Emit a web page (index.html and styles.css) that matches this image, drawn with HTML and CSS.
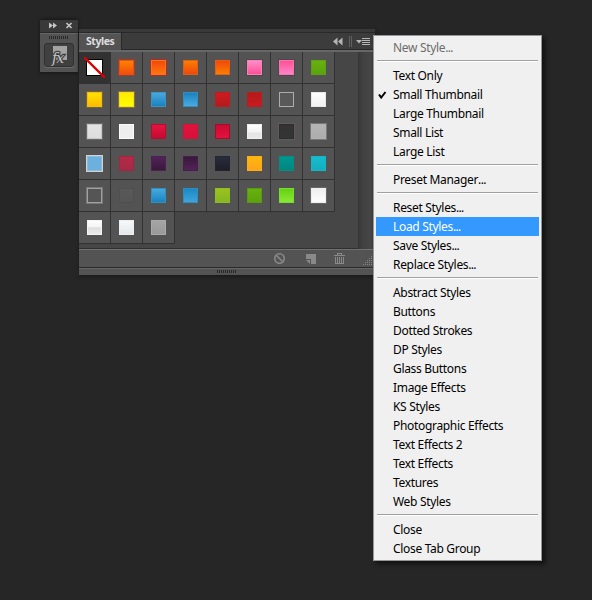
FILE: index.html
```
<!DOCTYPE html>
<html lang="en">
<head>
<meta charset="utf-8">
<title>Styles</title>
<link rel="stylesheet" href="styles.css">
</head>
<body>
<main class="workspace">
  <aside class="dock">
    <header class="dock-head">
      <svg width="38" height="12" viewBox="0 0 38 12" fill="#c4c4c4"><path d="M9 2.500l4 3-4 3zM13 2.500l4 3-4 3z"/><path d="M26.500 3l5 5M31.500 3l-5 5" stroke="#c4c4c4" stroke-width="1.700"/></svg>
    </header>
    <div class="dock-body">
      <div class="grip"></div>
      <button class="fx" aria-label="Styles">
        <svg width="28" height="22" viewBox="0 0 28 22"><path d="M8 2h14v14H8z" fill="#a3a3a3"/><text x="7" y="19">fx</text></svg>
      </button>
    </div>
  </aside>
  <section class="panel">
    <div class="panel-strip"></div>
    <header class="tabs">
      <div class="tab">Styles</div>
      <div class="tabs-rest">
        <svg width="42" height="17" viewBox="0 0 42 17" fill="#b5b5b5"><path d="M4.500 4.500v8l-4.500-4zM9.500 4.500v8l-4.500-4z"/><path d="M16 3h1v11h-1zM18 3h1v11h-1z" fill="#606060"/><path d="M23 7h6l-3 3.500zM29 5h8v1h-8zM29 7h8v1h-8zM29 9h8v1h-8zM29 11h8v1h-8z"/></svg>
      </div>
    </header>
    <div class="panel-body">
      <div class="swatches" id="swatches"></div>
      <div class="scroll"></div>
    </div>
    <footer class="tools">
      <svg width="104" height="17" viewBox="0 0 104 17">
        <g fill="none" stroke="#898989" stroke-width="1.600"><circle cx="8.500" cy="8.500" r="4.700"/><path d="M5.500 5.500l6 6"/></g>
        <path d="M35 4h10v10h-5v-5h-5z" fill="#898989"/><path d="M35 10h4v4z" fill="#898989"/>
        <g fill="#898989"><path d="M63 5h11v1H63zM66 3h5v1h-5zM66 3h1v2h-1zM70 3h1v2h-1z"/><path d="M64 7h1v6h7V7h1v7h-9zM66 7h1v6h-1zM68 7h1v6h-1zM70 7h1v6h-1z"/></g>
        <path d="M92 14.500h10M94 12.500h8M96 10.500h6M98 8.500h4M100 6.500h2" stroke="#858585" stroke-dasharray="1 1"/>
      </svg>
    </footer>
    <div class="bottom-grip"><div class="grip"></div></div>
  </section>
  <nav class="menu">
    <div class="item disabled">New Style<span class="dots">...</span></div>
    <hr>
    <div class="item">Text Only</div>
    <div class="item"><svg class="check" width="9" height="8" viewBox="0 0 9 8"><path d="M1 3.500L3.200 6.500L7.500 1" fill="none" stroke="#000" stroke-width="2"/></svg>Small Thumbnail</div>
    <div class="item">Large Thumbnail</div>
    <div class="item">Small List</div>
    <div class="item">Large List</div>
    <hr>
    <div class="item">Preset Manager<span class="dots">...</span></div>
    <hr>
    <div class="item">Reset Styles<span class="dots">...</span></div>
    <div class="item active">Load Styles<span class="dots">...</span></div>
    <div class="item">Save Styles<span class="dots">...</span></div>
    <div class="item">Replace Styles<span class="dots">...</span></div>
    <hr>
    <div class="item">Abstract Styles</div>
    <div class="item">Buttons</div>
    <div class="item">Dotted Strokes</div>
    <div class="item">DP Styles</div>
    <div class="item">Glass Buttons</div>
    <div class="item">Image Effects</div>
    <div class="item">KS Styles</div>
    <div class="item">Photographic Effects</div>
    <div class="item">Text Effects 2</div>
    <div class="item">Text Effects</div>
    <div class="item">Textures</div>
    <div class="item">Web Styles</div>
    <hr>
    <div class="item">Close</div>
    <div class="item">Close Tab Group</div>
  </nav>
</main>
<script src="swatches.js"></script>
</body>
</html>
```
FILE: swatches.js
```
// [top colour, bottom colour (or further stops), edge colour, optional outer glow colour]
const styles = [
  null,
  ['#ff8500', '#f04a0c', '#e2531a', '#9c3d2d'], ['#f2450b', '#ff7a0c', '#f8741e', '#a52f2a'], ['#fb8200', '#ef430c', '#d9611b'],
  ['#f0430b', '#fd8300', '#e4600f'], ['#ff92ce', '#ff4a90', '#f980b8', '#494949'], ['#ff4d90', '#ff88cc', '#f477ae', '#494949'], ['#69b210', '#5aa20c', '#5da010'],
  ['#ffe500', '#ffb900', '#eebd18', '#756239'], ['#ffe800', '#ffff00', '#f4dd20', '#87703a'], ['#4dabdf', '#1580bd', '#3d93c3'], ['#1580bd', '#4dafe4', '#368dbb'],
  ['#d11b20', '#b21a1d', '#bd1d20'], ['#b31a1a', '#ca1a1f', '#b91d20'], ['#595959', '#595959', '#acacac'], ['#ffffff', '#f0f0f0', '#e8e8e8'],
  ['#e4e4e4', '#dddddd', '#c7c7c7', '#696969'], ['#ededed', '#efefef', '#fafafa'], ['#e91442', '#c20a30', '#b60c30'], ['#e1133d', '#d8103a', '#d01338'],
  ['#c80a32', '#e51340', '#a70b2b'], ['#ffffff', '#f4f4f4 50%, #e5e5e5 62%, #e8e8e8', '#eeeeee'], ['#323232', '#353535', '#2d2d2d', '#625b5b'], ['#b5b5b5', '#acacac', '#b2b2b2', '#777777'],
  ['#6cb0de', '#6cb0de', '#8db9da', '#d2d2d2'], ['#b42a47', '#a42a46', '#a32640'], ['#54235a', '#371839', '#4d2252'], ['#371839', '#54235a', '#471e4b'],
  ['#2b2d3e', '#1d1d25', '#25252f'], ['#ffb90f', '#ffa31a', '#fcae16'], ['#009890', '#00857e', '#008e86'], ['#17bccf', '#12aebd', '#14b5c6'],
  ['#555555', '#555555', '#a1a1a1', '#777777'], ['#595959', '#555555', '#4f4f4f'], ['#4aacdf', '#1681bf', '#338fbe'], ['#1787c4', '#42a6dc', '#318dbc'],
  ['#9bc420', '#83b620', '#8fbd21'], ['#68b20f', '#5ba20b', '#5b9913'], ['#61d00f', '#8eea35', '#76dd32'], ['#eeeeee', '#ffffff', '#ededed', '#676767'],
  ['#ffffff', '#f4f4f4 45%, #dedede 52%, #ececec', '#f3f3f3'], ['#f8f9fa', '#e4e6e9', '#eceef0'], ['#a5a5a5', '#999999', '#aaaaaa']
];

const grid = document.getElementById('swatches');
for (const style of styles) {
  const cell = document.createElement('div');
  cell.className = 'cell';
  const chip = document.createElement('i');
  if (style) {
    const [top, bottom, edge, glow] = style;
    chip.className = 'chip';
    chip.style.background = `linear-gradient(${top}, ${bottom})`;
    chip.style.boxShadow = `inset 0 0 0 1px ${edge}` + (glow ? `, 0 0 0 1px ${glow}` : '');
  } else {
    cell.classList.add('selected');
    chip.className = 'chip none';
    chip.innerHTML = '<svg width="21" height="21" viewBox="0 0 21 21"><path d="M1 1l19 19" stroke="#df0000" stroke-width="2.3" stroke-linecap="square"/></svg>';
  }
  cell.append(chip);
  grid.append(cell);
}
```
FILE: styles.css
```
* { box-sizing: border-box; }
body { margin: 0; background: #262626; font-family: "Noto Sans", "Open Sans", sans-serif; }
svg { display: block; }
.workspace { display: flex; align-items: flex-start; width: 592px; height: 600px; padding-left: 40px; overflow: hidden; }

.dock { width: 38px; height: 54px; margin-top: 19px; border: 1px solid #1c1c1c; border-width: 1px 0; border-radius: 3px 3px 0 0; background: #535353; box-shadow: 0 0 3px #151515; flex: none; }
.dock-head { height: 13px; background: #393939; border-bottom: 1px solid #292929; border-radius: 3px 3px 0 0; }
.dock-body { height: 39px; border-top: 1px solid #666; display: flex; flex-direction: column; align-items: center; }
.grip { width: 20px; height: 3px; background: repeating-linear-gradient(90deg, #292929 0 1px, transparent 1px 2px); }
.dock-body .grip { margin: 2px 0 4px; }
.fx { width: 30px; height: 24px; padding: 0; border: 1px solid #303030; border-radius: 3px; background: #404040; box-shadow: 0 1px #6a6a6a; }
.fx text { font: italic 14px "DejaVu Serif", serif; letter-spacing: -1px; fill: #c4c4c4; stroke: #404040; stroke-width: 2.500px; paint-order: stroke; }

.panel { width: 296px; margin: 29px 0 0 1px; flex: none; box-shadow: 0 2px 3px #1b1b1b; }
.panel-strip { height: 4px; background: #393939; border-bottom: 1px solid #292929; }
.tabs { display: flex; height: 17px; }
.tab { width: 42px; padding-left: 7px; background: #535353; border-top: 1px solid #646464; font-size: 10.500px; letter-spacing: -0.450px; font-weight: 700; line-height: 15px; color: #dedede; }
.tabs-rest { flex: 1; display: flex; justify-content: flex-end; border: solid #282828; border-width: 0 0 1px 1px; background: #3c3c3c; }
.panel-body { display: flex; height: 199px; border-top: 2px solid #676767; background: #464646; }
.swatches { flex: 1; display: grid; grid-template-columns: repeat(8, 32px); grid-auto-rows: 32px; align-content: start; }
.cell { display: grid; place-items: center; background: #535353; border: solid #323232; border-width: 0 1px 1px 0; }
.cell.selected { background: #323232; }
.chip { display: block; width: 15px; height: 15px; }
.chip.none { display: grid; place-items: center; width: 17px; height: 17px; background: #fff; border: 1px solid #000; }
.chip.none svg { margin: -3px; }
.scroll { width: 17px; background: linear-gradient(90deg, #363636, #404040 4px, #464646 12px, #3c3c3c); }
.tools { display: flex; justify-content: flex-end; height: 18px; border-top: 1px solid #707070; background: #535353; box-shadow: 0 -1px #303030; }
.bottom-grip { height: 8px; padding-top: 2px; border-top: 1px solid #2a2a2a; background: #535353; box-shadow: inset 0 1px #666; display: flex; justify-content: center; }

.menu { position: relative; width: 169px; height: 526px; margin: 35px 0 0 -2px; padding: 2px; border: 1px solid #979797; background: #f0f0f0; box-shadow: 3px 3px 4px #111; flex: none; }
.item { display: flex; align-items: center; height: 19px; padding-left: 17px; color: #000; font-size: 12px; letter-spacing: -0.320px; line-height: 19px; white-space: nowrap; }
.dots { letter-spacing: -0.700px; }
.item.disabled { color: #6d6d6d; }
.item.active { background: #3399ff; color: #fff; }
.check { margin: 0 6px 0 -15px; }
.menu hr { height: 2px; margin: 3px 1px 4px; border: 0; border-top: 1px solid #a0a0a0; background: #fff; }
```
